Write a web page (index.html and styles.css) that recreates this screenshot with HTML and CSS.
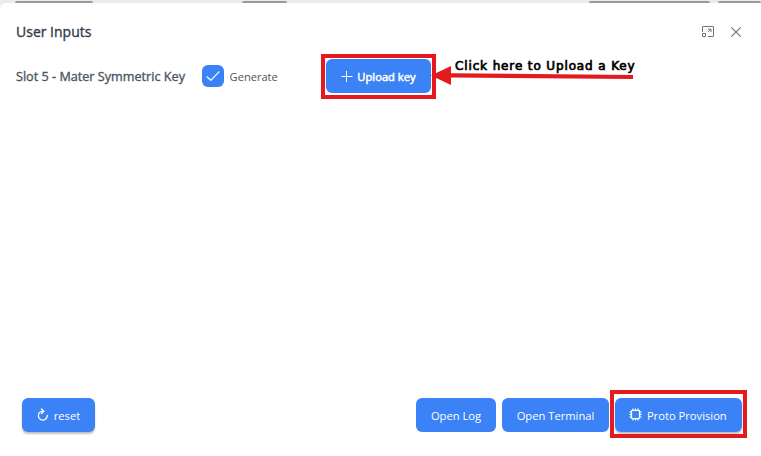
FILE: index.html
```html
<!DOCTYPE html>
<html lang="en">
<head>
<meta charset="utf-8">
<title>User Inputs</title>
<link rel="stylesheet" href="styles.css">
</head>
<body>
<div class="backdrop">
  <span class="tab tab-a"></span><span class="tab tab-b"></span><span class="tab tab-c"></span><span class="tab tab-d"></span>
</div>
<section class="dialog">
  <header class="header">
    <h1 class="title">User Inputs</h1>
    <svg class="icon-max" width="14" height="14" viewBox="0 0 14 14" fill="none" stroke="#6b7280"><path d="M1.5 7V2Q1.5 1.5 2 1.5H12Q12.5 1.5 12.5 2V11Q12.5 11.5 12 11.5H7M1.5 8.5H4.5V11.5H1.5ZM7 7L10 4M7.2 4.2H10V7"/></svg>
    <svg class="icon-close" width="12" height="12" viewBox="0 0 12 12" fill="none" stroke="#6b7280" stroke-width="1.2"><path d="M1.3 1.3L10.7 10.7M10.7 1.3L1.3 10.7"/></svg>
  </header>
  <main class="content">
    <span class="slot">Slot 5 - Mater Symmetric Key</span>
    <span class="check"><svg width="22" height="22" viewBox="0 0 22 22" fill="none" stroke="#fff" stroke-width="1.2" stroke-linecap="round" stroke-linejoin="round"><path d="M5 11.8L8.8 15.3L17 6.8"/></svg></span>
    <span class="generate">Generate</span>
    <button class="btn upload"><svg width="12" height="12" viewBox="0 0 12 12" fill="none" stroke="#fff"><path d="M.5 6.5H11.5M5.5 1V12"/></svg><span>Upload key</span></button>
  </main>
  <footer class="footer">
    <button class="btn raised reset"><svg width="12" height="14" viewBox="0 0 12 14" fill="none" stroke="#fff" stroke-width="1.3" stroke-linecap="round" stroke-linejoin="round"><path d="M2.4 4.6A4.5 4.5 0 1 0 10.3 7.5M2.4 4.6Q3.8 3.2 6.3 3.2M4.5 1L6.9 3.2L4.5 5.5"/></svg><span>reset</span></button>
    <button class="btn log"><span>Open Log</span></button>
    <button class="btn terminal"><span>Open Terminal</span></button>
    <button class="btn raised provision"><svg width="13" height="13" viewBox="0 0 13 13" fill="none" stroke="#fff"><rect x="2.4" y="1.4" width="8.2" height="8.2" rx="1" stroke-width="1.4"/><path stroke-width="1.1" d="M4 -.4V1M6.5 -.4V1M9 -.4V1M4 10V11.6M6.5 10V11.6M9 10V11.6M.4 3H2M.4 5.5H2M.4 8H2M11 3H12.6M11 5.5H12.6M11 8H12.6"/></svg><span>Proto Provision</span></button>
  </footer>
</section>
<div class="mark mark-upload"></div>
<div class="mark mark-provision"></div>
<svg class="arrow" width="204" height="22" viewBox="0 0 204 22" fill="#e31b1f"><path d="M0 9.5L20 0V7.2L202 9V13L20 11.5V19Z"/></svg>
<div class="note">Click here to Upload a Key</div>
</body>
</html>
```
FILE: styles.css
```css
* { box-sizing: border-box; }
body {
  margin: 0;
  width: 761px;
  height: 456px;
  overflow: hidden;
  background: #ebebeb;
  font-family: "Open Sans", sans-serif;
  color: #4b5563;
}
.backdrop { display: flex; height: 3px; padding-top: 1px; }
.tab { flex: none; height: 2px; background: #9a9a9d; border-radius: 2px 2px 0 0; }
.tab-a { width: 78px; margin-left: 15px; }
.tab-b { width: 45px; margin-left: 149px; }
.tab-c { width: 121px; margin-left: 302px; }
.tab-d { width: 43px; margin-left: 8px; }
.dialog {
  display: flex;
  flex-direction: column;
  height: 453px;
  background: #fff;
  border-radius: 6px 0 0 0;
}
.header { display: flex; align-items: center; height: 56px; padding: 0 19px 0 16px; }
.title {
  margin: 1px auto 0 0;
  font-size: 14px;
  font-weight: 400;
  color: #343b4b;
  -webkit-text-stroke: .35px #343b4b;
}
.icon-max { margin: 1px 15px 0 0; }
.icon-close { margin-top: 1px; }
.content { display: flex; align-items: center; flex: none; height: 34px; padding-left: 16px; }
.slot { flex: none; width: 186px; font-size: 12.65px; white-space: nowrap; -webkit-text-stroke: .35px #4b5563; }
.check { flex: none; width: 22px; height: 22px; border-radius: 6px; background: #3b82f6; }
.check svg { display: block; }
.generate { width: 96.4px; margin: 1px 0 0 5.6px; font-size: 11.1px; }
.btn {
  display: flex;
  align-items: center;
  justify-content: center;
  height: 34px;
  padding: 0;
  border: 0;
  border-radius: 6px;
  background: #3b82f6;
  color: #fff;
  font: 400 11.2px "Open Sans", sans-serif;
  white-space: nowrap;
}
.upload { width: 105px; gap: 4px; font-size: 11.2px; -webkit-text-stroke: .5px #fff; }
.footer { display: flex; align-items: center; height: 34px; margin-top: 305px; padding: 0 19px 0 22px; }
.raised { box-shadow: 0 2px 2px rgba(0, 0, 0, .25); }
.reset { width: 73px; gap: 5px; margin-right: auto; }
.log { width: 80px; margin-right: 6px; }
.terminal { width: 107px; margin-right: 6px; }
.provision { width: 127px; gap: 5px; padding-right: 1.4px; }
.provision svg { overflow: visible; }
.mark { position: absolute; border: 4px solid #e31b1f; }
.mark-upload { left: 321px; top: 54px; width: 115px; height: 45px; }
.mark-provision { left: 610px; top: 390px; width: 137px; height: 48px; }
.arrow { position: absolute; left: 431px; top: 66px; }
.note {
  position: absolute;
  left: 455px;
  top: 58px;
  font: 400 12px/17px "DejaVu Sans", sans-serif;
  letter-spacing: .87px;
  -webkit-text-stroke: .7px #000;
  color: #000;
  white-space: nowrap;
}
```
